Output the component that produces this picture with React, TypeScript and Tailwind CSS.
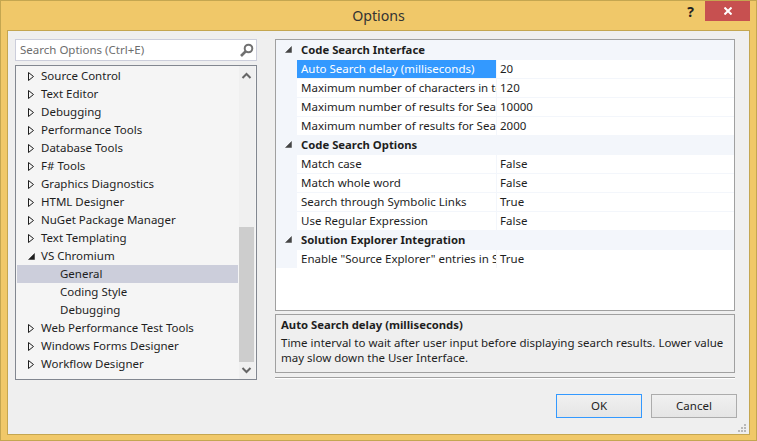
import React from "react";

const Collapsed = () => (
  <svg width="9" height="11" viewBox="0 0 9 11" className="shrink-0">
    <path d="M1.5 1.5 L6.5 5.5 L1.5 9.5 Z" fill="none" stroke="#1e1e1e" strokeWidth="1" />
  </svg>
);
const Expanded = ({ color = "#1e1e1e" }: { color?: string }) => (
  <svg width="9" height="9" viewBox="0 0 9 9" className="shrink-0">
    <path d="M7.5 1.5 L7.5 7.5 L1.5 7.5 Z" fill={color} stroke={color} strokeWidth="0.5" />
  </svg>
);

const before = ["Source Control", "Text Editor", "Debugging", "Performance Tools", "Database Tools", "F# Tools", "Graphics Diagnostics", "HTML Designer", "NuGet Package Manager", "Text Templating"];
const after = ["Web Performance Test Tools", "Windows Forms Designer", "Workflow Designer"];

const TreeRow = ({ label }: { label: string }) => (
  <div className="flex h-[18px] items-center pl-[10px]">
    <Collapsed />
    <span className="ml-[5px]">{label}</span>
  </div>
);
const ChildRow = ({ label, sel }: { label: string; sel?: boolean }) => (
  <div className={`flex h-[18px] items-center pl-[43px] ${sel ? "bg-[#cccedb]" : ""}`}>
    <span>{label}</span>
  </div>
);

const Cat = ({ label }: { label: string }) => (
  <div className="flex h-[19px] items-center bg-[#f3f6fb] pl-[8px]">
    <Expanded color="#444444" />
    <span className="ml-[8px] pt-[2px] font-bold text-[11.3px]">{label}</span>
  </div>
);
const Prop = ({ name, value, sel }: { name: string; value: string; sel?: boolean }) => (
  <div className="flex h-[19px] items-stretch border-t border-[#f3f6fb] bg-white">
    <div className="w-[21px] shrink-0 bg-[#f3f6fb]" />
    <div className={`w-[199px] shrink-0 overflow-hidden whitespace-nowrap pl-[4px] leading-[18px] ${sel ? "bg-[#3399ff] text-white" : ""}`}>{name}</div>
    <div className="w-px shrink-0 bg-[#f3f6fb]" />
    <div className="pl-[3px] leading-[18px]">{value}</div>
  </div>
);

export default function App() {
  return (
    <div className="w-[757px] h-[441px] bg-[#f0c869] border border-[#c4a650] flex flex-col text-[11.5px] text-[#1e1e1e] overflow-hidden" style={{ fontFamily: '"Noto Sans", "Open Sans", sans-serif' }}>
      <div className="h-[29px] shrink-0 flex relative">
        <div className="flex-1 text-center text-[14.2px] leading-[29px] text-[#333]">Options</div>
        <div className="absolute right-[62px] top-[2px] text-[14px] font-bold text-[#222] leading-[18px]">?</div>
        <div className="absolute right-[6px] top-0 w-[45px] h-[20px] bg-[#c75050] flex items-center justify-center">
          <svg width="8" height="8" viewBox="0 0 8 8"><path d="M0.5 0.5 L7.5 7.5 M7.5 0.5 L0.5 7.5" stroke="#fff" strokeWidth="2" /></svg>
        </div>
      </div>
      <div className="flex-1 mx-[6px] mb-[7px] bg-[#efefef] border border-[#c4a650] flex flex-col relative">
        <div className="flex-1 flex pl-[7px] pr-[14px] pt-[8px] gap-[18px] min-h-0">
          <div className="w-[242px] flex flex-col shrink-0">
            <div className="h-[22px] bg-white border border-[#cccedb] flex items-center pl-[4px] pr-[2px] text-[#6d6d6d]">
              <span className="flex-1">Search Options (Ctrl+E)</span>
              <svg width="15" height="15" viewBox="0 0 15 15">
                <circle cx="9.5" cy="5.5" r="3.8" fill="none" stroke="#717171" strokeWidth="2" />
                <path d="M6.5 8.5 L2 13" stroke="#717171" strokeWidth="2.6" />
              </svg>
            </div>
            <div className="mt-[4px] h-[315px] border border-[#828790] bg-[#f5f5f5] flex">
              <div className="w-[222px] pt-[1px] pl-px">
                {before.map((l) => <TreeRow key={l} label={l} />)}
                <div className="flex h-[18px] items-center pl-[10px]">
                  <Expanded />
                  <span className="ml-[5px]">VS Chromium</span>
                </div>
                <ChildRow label="General" sel />
                <ChildRow label="Coding Style" />
                <ChildRow label="Debugging" />
                {after.map((l) => <TreeRow key={l} label={l} />)}
              </div>
              <div className="ml-px w-[16px] h-full flex flex-col bg-[#f0f0f0]">
                <svg width="15" height="17" viewBox="0 0 15 17" className="shrink-0"><path d="M3.5 12 L7.5 8 L11.5 12" fill="none" stroke="#666" strokeWidth="2" /></svg>
                <div className="flex-1 w-full flex flex-col justify-end">
                  <div className="h-[135px] w-[15px] bg-[#cdcdcd]" />
                </div>
                <svg width="15" height="17" viewBox="0 0 15 17" className="shrink-0"><path d="M3.5 6 L7.5 10 L11.5 6" fill="none" stroke="#666" strokeWidth="2" /></svg>
              </div>
            </div>
          </div>
          <div className="flex-1 flex flex-col">
            <div className="h-[272px] border border-[#a0a0a0] bg-white">
              <Cat label="Code Search Interface" />
              <Prop name="Auto Search delay (milliseconds)" value="20" sel />
              <Prop name="Maximum number of characters in text" value="120" />
              <Prop name="Maximum number of results for Seach" value="10000" />
              <Prop name="Maximum number of results for Search" value="2000" />
              <Cat label="Code Search Options" />
              <Prop name="Match case" value="False" />
              <Prop name="Match whole word" value="False" />
              <Prop name="Search through Symbolic Links" value="True" />
              <Prop name="Use Regular Expression" value="False" />
              <Cat label="Solution Explorer Integration" />
              <Prop name={'Enable "Source Explorer" entries in Solution'} value="True" />
            </div>
            <div className="mt-[3px] h-[59px] border border-[#a0a0a0] px-[5px] bg-[#efefef]">
              <div className="font-bold text-[11.3px] leading-[17px] mt-[1px]">Auto Search delay (milliseconds)</div>
              <div className="leading-[15px] mt-[2px]">Time interval to wait after user input before displaying search results. Lower value may slow down the User Interface.</div>
            </div>
            <div className="mt-[4px] h-[2px] bg-[#a0a0a0] border-b border-white" />
          </div>
        </div>
        <div className="h-[54px] shrink-0 flex justify-end gap-[9px] pt-[14px] pr-[12px]">
          <button className="w-[86px] h-[24px] border border-[#3399ff] bg-gradient-to-b from-[#f0f0f0] to-[#e5e5e5]">OK</button>
          <button className="w-[86px] h-[24px] border border-[#acacac] bg-gradient-to-b from-[#f0f0f0] to-[#e5e5e5]">Cancel</button>
        </div>
        <svg width="9" height="9" viewBox="0 0 9 9" className="absolute right-[3px] bottom-[2px]">
          <path d="M7 1h2v2H7zM4 4h2v2H4zM7 4h2v2H7zM1 7h2v2H1zM4 7h2v2H4zM7 7h2v2H7z" fill="#b8b8b8" />
        </svg>
      </div>
    </div>
  );
}
